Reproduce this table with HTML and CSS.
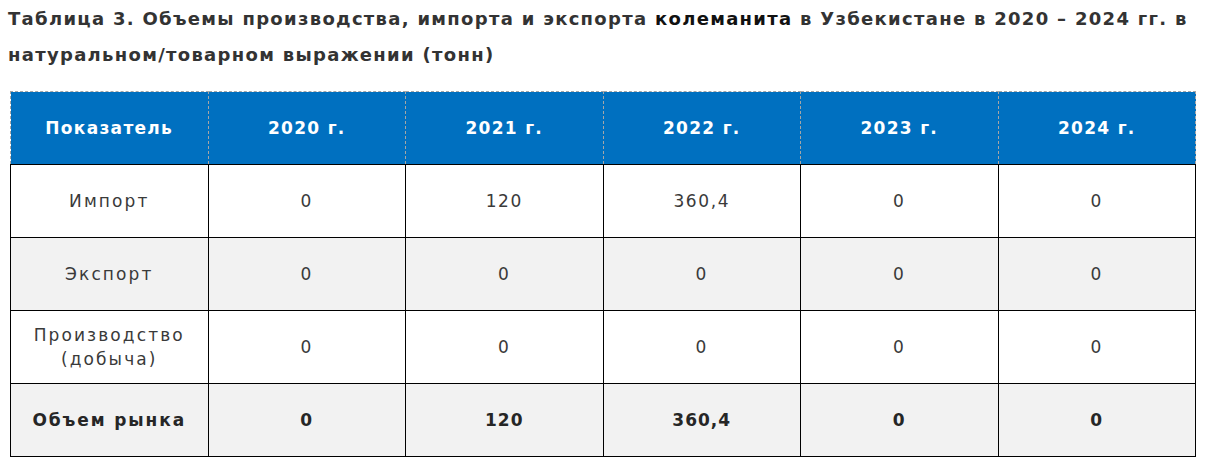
FILE: index.html
```html
<!DOCTYPE html>
<html lang="ru">
<head>
<meta charset="utf-8">
<title>Таблица 3</title>
<link rel="stylesheet" href="styles.css">
</head>
<body>
<h2 class="title"><span class="line">Таблица 3. Объемы производства, импорта и экспорта <span class="accent">колеманита</span> в Узбекистане в 2020 – 2024 гг. в</span><span class="line">натуральном/товарном выражении (тонн)</span></h2>
<table class="data">
  <thead>
    <tr>
      <th>Показатель</th>
      <th>2020 г.</th>
      <th>2021 г.</th>
      <th>2022 г.</th>
      <th>2023 г.</th>
      <th>2024 г.</th>
    </tr>
  </thead>
  <tbody>
    <tr>
      <td class="label">Импорт</td><td>0</td><td>120</td><td>360,4</td><td>0</td><td>0</td>
    </tr>
    <tr class="alt">
      <td class="label">Экспорт</td><td>0</td><td>0</td><td>0</td><td>0</td><td>0</td>
    </tr>
    <tr>
      <td class="label">Производство<br>(добыча)</td><td>0</td><td>0</td><td>0</td><td>0</td><td>0</td>
    </tr>
    <tr class="alt total">
      <td class="label">Объем рынка</td><td>0</td><td>120</td><td>360,4</td><td>0</td><td>0</td>
    </tr>
  </tbody>
</table>
</body>
</html>
```

FILE: styles.css
```css
html, body {
  margin: 0;
  padding: 0;
  background: #ffffff;
}

body {
  font-family: "DejaVu Sans", "Liberation Sans", sans-serif;
  color: #333333;
}

.title {
  margin: 0;
  padding: 1px 8px 0 8px;
  font-size: 18px;
  line-height: 36px;
  font-weight: 700;
  color: #333333;
  letter-spacing: 1.3px;
}

.title .line {
  display: block;
  white-space: nowrap;
}

.title .accent {
  color: #111111;
}

.data {
  margin: 18px 0 0 10px;
  width: 1186px;
  border-collapse: collapse;
  table-layout: fixed;
}

.data th {
  background: #0070c0;
  color: #ffffff;
  font-weight: 700;
  font-size: 17px;
  letter-spacing: 1.3px;
  height: 72px;
  padding: 0;
  text-align: center;
  vertical-align: middle;
  border: 1px dashed #a6a6a6;
  border-bottom: 1px solid #000000;
}

.data td {
  height: 72px;
  padding: 0;
  text-align: center;
  vertical-align: middle;
  font-size: 17px;
  font-weight: 400;
  letter-spacing: 1.6px;
  line-height: 24px;
  color: #3a3a3a;
  border: 1px solid #000000;
  background: #ffffff;
}

.data td.label {
  letter-spacing: 2.1px;
}

.data tr.alt td {
  background: #f2f2f2;
}

.data tr.total td {
  font-weight: 700;
  letter-spacing: 1px;
  color: #262626;
}

.data tr.total td.label {
  letter-spacing: 1.9px;
}
```
